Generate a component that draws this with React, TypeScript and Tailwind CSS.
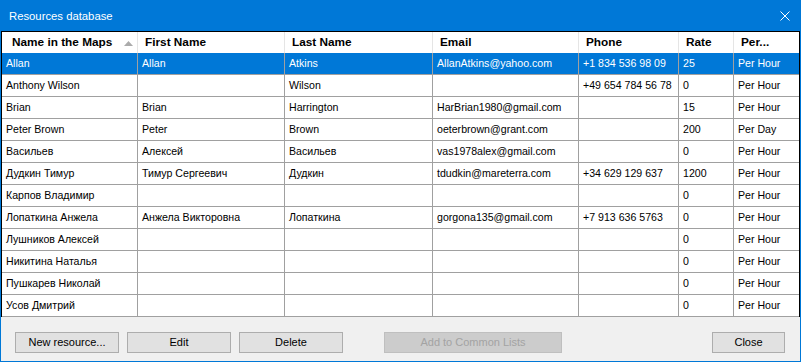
import React from "react";

const cols = [136, 147, 148, 146, 100, 55, 65];
const headers = ["Name in the Maps", "First Name", "Last Name", "Email", "Phone", "Rate", "Per..."];

const rows: string[][] = [
  ["Allan", "Allan", "Atkins", "AllanAtkins@yahoo.com", "+1 834 536 98 09", "25", "Per Hour"],
  ["Anthony Wilson", "", "Wilson", "", "+49 654 784 56 78", "0", "Per Hour"],
  ["Brian", "Brian", "Harrington", "HarBrian1980@gmail.com", "", "15", "Per Hour"],
  ["Peter Brown", "Peter", "Brown", "oeterbrown@grant.com", "", "200", "Per Day"],
  ["Васильев", "Алексей", "Васильев", "vas1978alex@gmail.com", "", "0", "Per Hour"],
  ["Дудкин Тимур", "Тимур Сергеевич", "Дудкин", "tdudkin@mareterra.com", "+34 629 129 637", "1200", "Per Hour"],
  ["Карпов Владимир", "", "", "", "", "0", "Per Hour"],
  ["Лопаткина Анжела", "Анжела Викторовна", "Лопаткина", "gorgona135@gmail.com", "+7 913 636 5763", "0", "Per Hour"],
  ["Лушников Алексей", "", "", "", "", "0", "Per Hour"],
  ["Никитина Наталья", "", "", "", "", "0", "Per Hour"],
  ["Пушкарев Николай", "", "", "", "", "0", "Per Hour"],
  ["Усов Дмитрий", "", "", "", "", "0", "Per Hour"],
];

function Btn({ label, w, disabled }: { label: string; w: number; disabled?: boolean }) {
  return (
    <div
      style={{ width: w }}
      className={
        "h-[21px] flex items-center justify-center text-[11px] border " +
        (disabled
          ? "bg-[#cccccc] border-[#bfbfbf] text-[#a3a3a3]"
          : "bg-[#e1e1e1] border-[#adadad] text-black")
      }
    >
      {label}
    </div>
  );
}

export default function App() {
  return (
    <div className="w-[801px] h-[362px] border border-[#0078d7] bg-[#f0f0f0] flex flex-col font-['Liberation_Sans',Arial,sans-serif] overflow-hidden">
      <div className="h-[30px] shrink-0 bg-[#0078d7] flex items-center justify-between pl-[8px] pr-[10px] text-white text-[11.3px]">
        <span>Resources database</span>
        <svg width="10" height="10" viewBox="0 0 10 10">
          <path d="M0.5 0.5 L9.5 9.5 M9.5 0.5 L0.5 9.5" stroke="white" strokeWidth="1" />
        </svg>
      </div>
      <div className="shrink-0 border border-black border-b-0 bg-white">
        <div className="flex h-[21px]">
          {headers.map((h, i) => (
            <div
              key={i}
              style={{ width: cols[i] }}
              className={
                "relative shrink-0 flex items-center font-bold text-[11.8px] text-black whitespace-nowrap overflow-hidden " +
                (i === 0 ? "pl-[10px] " : "pl-[7px] ") +
                (i < cols.length - 1 ? "border-r border-[#e5e5e5]" : "")
              }
            >
              {h}
              {i === 0 && (
                <svg width="9" height="5" viewBox="0 0 9 5" className="absolute left-[122px] top-[9px]">
                  <polygon points="4.5,0 9,5 0,5" fill="#ababab" />
                </svg>
              )}
            </div>
          ))}
        </div>
        {rows.map((r, ri) => {
          const sel = ri === 0;
          return (
            <div
              key={ri}
              className={
                "flex h-[22px] border-b border-[#a0a0a0] " + (sel ? "bg-[#0078d7] text-white" : "text-black")
              }
            >
              {r.map((c, ci) => (
                <div
                  key={ci}
                  style={{ width: cols[ci] }}
                  className={
                    "shrink-0 flex items-center pl-[4px] text-[10.6px] whitespace-nowrap overflow-hidden " +
                    (ci < cols.length - 1 ? "border-r border-[#a0a0a0]" : "")
                  }
                >
                  {c}
                </div>
              ))}
            </div>
          );
        })}
      </div>
      <div className="flex-1 flex items-start pt-[15px] pl-[14px] pr-[15px]">
        <div className="flex gap-[8px]">
          <Btn label="New resource..." w={104} />
          <Btn label="Edit" w={104} />
          <Btn label="Delete" w={104} />
        </div>
        <div className="ml-[41px]">
          <Btn label="Add to Common Lists" w={178} disabled />
        </div>
        <div className="ml-auto">
          <Btn label="Close" w={73} />
        </div>
      </div>
    </div>
  );
}
